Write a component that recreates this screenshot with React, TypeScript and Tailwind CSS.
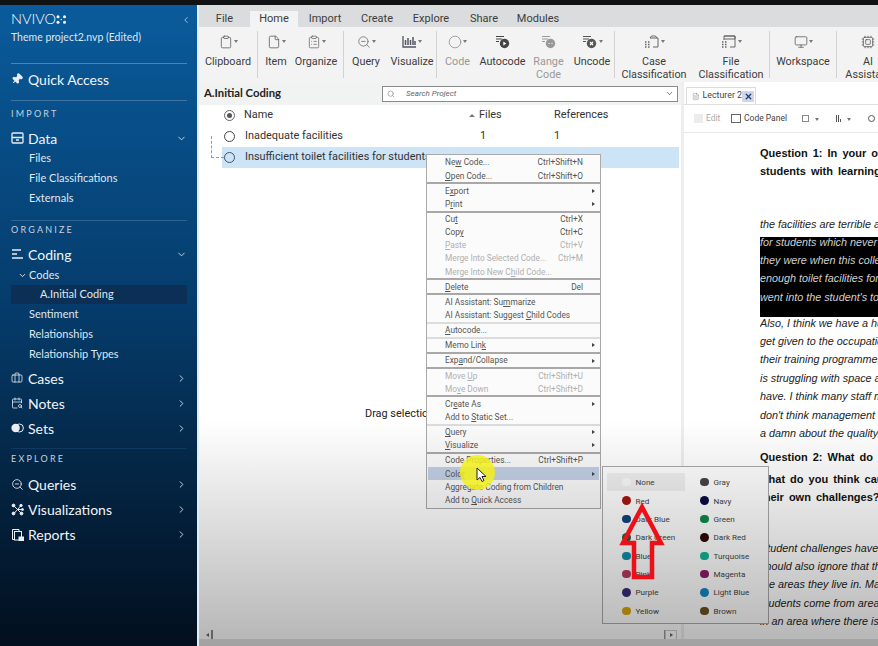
import React from "react";
import { ChevronDown, ChevronRight, ChevronLeft, Briefcase, CalendarSearch, ZoomOut, Pin, Clipboard, File, ClipboardList, Circle, Monitor, Cpu, Search, X, FileText } from "lucide-react";

const Caret = () => <span className="ml-[1px] inline-block h-0 w-0 border-x-[2.5px] border-t-[3px] border-x-transparent border-t-[#777]" />;

const DataIcon = () => (
  <svg width="13" height="12" viewBox="0 0 13 12" fill="none" stroke="#e8eef4" strokeWidth="1.3"><rect x="1" y="1" width="11" height="10" rx="1" /><path d="M1 5.5h11M5 8h3" /></svg>
);
const CodingIcon = () => (
  <svg width="13" height="12" viewBox="0 0 13 12" fill="none" stroke="#e8eef4" strokeWidth="1.6"><path d="M1 2h9M1 6h5M1 10h11" /></svg>
);
const SetsIcon = () => (
  <svg width="13" height="10" viewBox="0 0 13 10"><rect x="4" y="1" width="8.4" height="8" rx="4" fill="none" stroke="#e8eef4" strokeWidth="1" /><circle cx="4.6" cy="5" r="4.2" fill="#e8eef4" /></svg>
);
const VisIcon = () => (
  <svg width="13" height="13" viewBox="0 0 13 13" fill="#e8eef4" stroke="#e8eef4" strokeWidth="1"><path d="M2.5 2.5l8 8M10 2.5l-7 8M6 6.5h6" /><circle cx="2.5" cy="2.5" r="1.4" /><circle cx="10" cy="2.5" r="1.2" /><circle cx="2.5" cy="10.5" r="1.4" /><circle cx="10.5" cy="10.5" r="1.4" /><circle cx="11.5" cy="6.5" r="1" /></svg>
);
const ReportIcon = () => (
  <svg width="13" height="13" viewBox="0 0 13 13" fill="none" stroke="#e8eef4" strokeWidth="1"><path d="M3 11.5H1.5V1.5H8V3" /><rect x="3.5" y="3.5" width="7" height="8.5" /><rect x="8" y="9" width="4.5" height="3.5" fill="#e8eef4" /></svg>
);
const LogoDots = () => (
  <svg width="11" height="9" viewBox="0 0 11 9" fill="#fff"><circle cx="2" cy="1.8" r="1.5" /><circle cx="8.5" cy="1.8" r="1.5" /><circle cx="2" cy="7.2" r="1.5" /><circle cx="8.5" cy="7.2" r="1.5" /><circle cx="5.2" cy="4.5" r=".7" /></svg>
);

const Section = ({ t }: { t: string }) => (
  <div className="flex h-full items-center text-[9px] tracking-[2.2px] text-[#c5d2df]">{t}</div>
);
const Main = ({ icon, t, chev, className = "" }: { icon: React.ReactNode; t: string; chev?: "d" | "r"; className?: string }) => (
  <div className={`flex h-5 shrink-0 items-center text-[14px] text-[#f0f4f8] ${className}`}>
    <span className="flex w-[17px] shrink-0 items-center">{icon}</span>
    <span className="flex-1">{t}</span>
    {chev === "d" && <ChevronDown size={11} strokeWidth={2} color="#d5dee8" />}
    {chev === "r" && <ChevronRight size={11} strokeWidth={2} color="#d5dee8" />}
  </div>
);
const Sub = ({ t }: { t: string }) => <div className="flex h-5 shrink-0 items-center pl-[18px] text-[11px] text-[#dfe7ef]">{t}</div>;

function Sidebar() {
  return (
    <aside className="flex h-full w-[197px] shrink-0 flex-col bg-gradient-to-b from-[#0a5b9c] via-[#053a68] to-[#020f1e] pl-[11px] pr-[10px] font-[Lato,sans-serif]">
      <div className="h-[59px] shrink-0 border-b border-[#4d83ad]">
        <div className="mt-[5px] flex h-[18px] items-center pt-[1px] text-[14.5px] font-light leading-none text-white">
          <span>NVIVO</span><LogoDots />
          <span className="flex-1" />
          <ChevronLeft size={10} color="#b9cede" className="-mr-[4px]" />
        </div>
        <div className="flex h-5 items-center text-[10.5px] text-[#dbe7f1]">Theme project2.nvp (Edited)</div>
      </div>
      <div className="h-[37px] shrink-0 border-b border-[#3f75a0] pb-[10px] pt-[3px]">
        <Main icon={<Pin size={12} fill="#e8eef4" color="#e8eef4" className="rotate-45" />} t="Quick Access" className="!h-6" />
      </div>
      <div className="h-[22px] shrink-0 pt-[3px]"><Section t="IMPORT" /></div>
      <Main icon={<DataIcon />} t="Data" chev="d" className="mt-[5px]" />
      <Sub t="Files" />
      <Sub t="File Classifications" />
      <Sub t="Externals" />
      <div className="mt-[12px] h-[18px] shrink-0 border-t border-[#2f6390]"><Section t="ORGANIZE" /></div>
      <Main icon={<CodingIcon />} t="Coding" chev="d" className="mb-[1px] mt-[6px]" />
      <div className="flex h-5 shrink-0 items-center pl-[7px] text-[11px] text-[#dfe7ef]">
        <ChevronDown size={9} strokeWidth={2.5} className="mr-[2px]" />Codes
      </div>
      <div className="flex h-[19px] shrink-0 items-center bg-[#0c2f55] pl-[29px] text-[11px] text-[#dfe7ef]">A.Initial Coding</div>
      <Sub t="Sentiment" />
      <Sub t="Relationships" />
      <Sub t="Relationship Types" />
      <Main icon={<Briefcase size={12} strokeWidth={1.5} />} t="Cases" chev="r" className="mt-[4px]" />
      <Main icon={<CalendarSearch size={12} strokeWidth={1.5} />} t="Notes" chev="r" className="mt-[5px]" />
      <Main icon={<SetsIcon />} t="Sets" chev="r" className="mt-[5px]" />
      <div className="mt-[10px] h-5 shrink-0 border-t border-[#0f3a60]"><Section t="EXPLORE" /></div>
      <Main icon={<ZoomOut size={13} strokeWidth={1.5} />} t="Queries" chev="r" className="mt-[6px]" />
      <Main icon={<VisIcon />} t="Visualizations" chev="r" className="mt-[5px]" />
      <Main icon={<ReportIcon />} t="Reports" chev="r" className="mt-[5px]" />
    </aside>
  );
}

const tabs: [string, string][] = [
  ["File", "w-[51px]"], ["Home", "w-[48px]"], ["Import", "w-[54px]"], ["Create", "w-[50px]"], ["Explore", "w-[58px]"], ["Share", "w-[48px]"], ["Modules", "w-[60px]"],
];

const AutoIcon = ({ mark, color }: { mark: "play" | "dots" | "x"; color: string }) => (
  <svg width="16" height="14" viewBox="0 0 16 14" fill="none" stroke={color} strokeWidth="1.2">
    <path d="M1 1.5h8M1 4h6M1 6.5h3" />
    <circle cx="9.5" cy="8.5" r="4.7" fill={color} stroke="none" />
    {mark === "play" && <path d="M8.3 6.5l3 2-3 2z" fill="#fff" stroke="none" />}
    {mark === "dots" && <path d="M7.5 8.5h1M10.5 8.5h1" stroke="#fff" />}
    {mark === "x" && <path d="M8 7l3 3M11 7l-3 3" stroke="#fff" />}
  </svg>
);
const VisuIcon = () => (
  <svg width="15" height="13" viewBox="0 0 15 13" fill="none" stroke="#556" strokeWidth="1.3"><path d="M1 1v11h13" /><path d="M3.5 10V5M6 10V3M8.5 10V5M11 10V2M13 10V6" strokeWidth="1.5" /></svg>
);
const ClassIcon = () => (
  <svg width="16" height="14" viewBox="0 0 16 14" fill="none" stroke="#666" strokeWidth="1"><path d="M6 3h8v9H9M6 3l1.5-2h4L13 3" /><path d="M1 7h1.5M4 7h1.5M1 9.500h1.500M4 9.500h1.500M1 12h1.500M4 12h1.500" strokeWidth="1.500" /></svg>
);
const FileClassIcon = () => (
  <svg width="16" height="14" viewBox="0 0 16 14" fill="none" stroke="#666" strokeWidth="1"><path d="M3 5V1h11v11H9M3 1h11v3H3" /><path d="M1 7h1.500M4 7h1.500M1 9.500h1.500M4 9.500h1.500M1 12h1.500M4 12h1.500" strokeWidth="1.500" /></svg>
);

type RItem = { w: string; l: string[]; icon: React.ReactNode; caret?: boolean; dim?: boolean };
const groups: { cls?: string; items: RItem[] }[] = [
  { items: [{ w: "w-[58px]", l: ["Clipboard"], icon: <Clipboard size={14} strokeWidth={1.3} color="#555" />, caret: true }] },
  { cls: "w-[86px]", items: [
    { w: "w-[36px]", l: ["Item"], icon: <File size={14} strokeWidth={1.3} color="#555" />, caret: true },
    { w: "w-[44px]", l: ["Organize"], icon: <ClipboardList size={14} strokeWidth={1.3} color="#666" />, caret: true },
  ] },
  { items: [
    { w: "w-[44px]", l: ["Query"], icon: <ZoomOut size={14} strokeWidth={1.3} color="#666" />, caret: true },
    { w: "w-[48px]", l: ["Visualize"], icon: <VisuIcon />, caret: true },
  ] },
  { items: [
    { w: "w-[41px]", l: ["Code"], icon: <Circle size={14} strokeWidth={1.3} color="#888" />, caret: true, dim: true },
    { w: "w-[49px]", l: ["Autocode"], icon: <AutoIcon mark="play" color="#444" /> },
    { w: "w-[43px]", l: ["Range", "Code"], icon: <AutoIcon mark="dots" color="#999" />, dim: true },
    { w: "w-[44px]", l: ["Uncode"], icon: <AutoIcon mark="x" color="#555" />, caret: true },
  ] },
  { items: [
    { w: "w-[78px]", l: ["Case", "Classification"], icon: <ClassIcon />, caret: true },
    { w: "w-[76px]", l: ["File", "Classification"], icon: <FileClassIcon />, caret: true },
  ] },
  { items: [{ w: "w-[66px]", l: ["Workspace"], icon: <Monitor size={14} strokeWidth={1.3} color="#555" />, caret: true }] },
  { items: [{ w: "w-[62px]", l: ["AI", "Assistant"], icon: <Cpu size={14} strokeWidth={1.3} color="#555" /> }] },
];

function Ribbon() {
  return (
    <>
      <div className="flex h-[22px] shrink-0 items-end bg-[#dbdcdd] text-[11px] text-[#3c3c3c]">
        {tabs.map(([t, w]) => (
          <div key={t} className={`flex h-[16px] items-center justify-center pt-[1px] ${w} ${t === "Home" ? "bg-[#f3f3f3]" : ""}`}>{t}</div>
        ))}
      </div>
      <div className="flex h-[55px] shrink-0 overflow-hidden bg-[#f3f3f3] text-[10.8px] leading-[13px] text-[#3c3c3c]">
        {groups.map((g, i) => (
          <div key={i} className={`mt-[4px] flex h-[47px] shrink-0 border-r border-[#d2d2d2] last:border-r-0 ${g.cls ?? ""}`}>
            {g.items.map((it) => (
              <div key={it.l.join()} className={`flex shrink-0 flex-col items-center ${it.w} ${it.dim ? "text-[#999]" : ""}`}>
                <div className="flex h-[21px] shrink-0 items-center">{it.icon}{it.caret && <Caret />}</div>
                <div className="mt-[3px] text-center whitespace-nowrap">{it.l.map((x) => <div key={x}>{x}</div>)}</div>
              </div>
            ))}
          </div>
        ))}
      </div>
    </>
  );
}

function ListPanel() {
  return (
    <div className="flex w-[482px] shrink-0 flex-col bg-white text-[10.9px] text-[#333]">
      <div className="flex h-[23px] shrink-0 items-center bg-[#f1f2f2] pl-[5px] pr-[3px]">
        <span className="w-[178px] font-[Lato,sans-serif] text-[11.3px] font-bold text-[#222]">A.Initial Coding</span>
        <div className="flex h-[16px] flex-1 items-center border border-[#8a8a8a] bg-white pl-[4px] pr-[3px] text-[8px] italic text-[#666]">
          <Search size={8} color="#888" />
          <span className="ml-[11px] flex-1">Search Project</span>
          <ChevronDown size={9} color="#444" />
        </div>
      </div>
      <div className="flex h-[21px] shrink-0 items-center">
        <span className="ml-[25px] flex h-[11px] w-[11px] items-center justify-center rounded-full border border-[#666] text-[9px] leading-none"><span className="h-[5px] w-[5px] rounded-full bg-[#555]" /></span>
        <span className="ml-[9px] w-[225px]">Name</span>
        <span className="mr-[4px] h-0 w-0 border-x-[3px] border-b-[3px] border-x-transparent border-b-[#777]" />
        <span className="w-[75px]">Files</span>
        <span>References</span>
      </div>
      <div className="flex h-[21px] shrink-0 items-center pb-[1px]">
        <span className="ml-[25px] h-[11px] w-[11px] rounded-full border-[1.5px] border-[#444]" />
        <span className="ml-[10px] w-[235px]">Inadequate facilities</span>
        <span className="w-[74px]">1</span>
        <span>1</span>
      </div>
      <div className="relative ml-[23px] mr-[2px] flex h-[21px] shrink-0 items-center bg-[#cde4f7]">
        <span className="absolute -left-[11px] -top-[11px] h-[22px] w-[13px] border-b border-l border-dashed border-[#999]" />
        <span className="ml-[2px] h-[11px] w-[11px] rounded-full border-[1.5px] border-[#36536e]" />
        <span className="ml-[10px]">Insufficient toilet facilities for students</span>
      </div>
      <div className="flex flex-1 items-center justify-center pt-[30px]">
        <span className="w-[150px] text-[10.9px] text-[#222]">Drag selection</span>
      </div>
      <div className="flex h-[9px] shrink-0 items-center pl-[7px] pr-[4px]">
        <span className="h-0 w-0 border-y-[2.5px] border-r-[3px] border-y-transparent border-r-[#666]" />
        <span className="ml-[2px] h-[9px] w-[2px] bg-[#888]" />
        <span className="flex-1" />
        <span className="h-[10px] w-[1px] bg-[#999]" />
        <span className="flex h-[10px] w-[12px] items-center justify-center border border-[#ccc]"><span className="h-0 w-0 border-y-[2px] border-l-[3px] border-y-transparent border-l-[#666]" /></span>
      </div>
    </div>
  );
}

const Line = ({ b, c, children }: { b?: boolean; c?: string; children: React.ReactNode }) => (
  <div className={`h-[18.4px] overflow-hidden whitespace-nowrap leading-[18.4px] ${b ? "text-[11px] font-bold [word-spacing:2px]" : "text-[10.8px] italic"} ${c ?? ""}`}>{children}</div>
);

function DocPanel() {
  return (
    <div className="flex min-w-0 flex-1 flex-col bg-white">
      <div className="flex h-[23px] shrink-0 items-end border-b border-[#e0e0e0] bg-white pl-[2px]">
        <div className="flex h-[17px] w-[70px] items-center border border-b-0 border-[#dcdcdc] pl-[5px] text-[8.8px] text-[#444]">
          <FileText size={11} strokeWidth={1.2} color="#666" />
          <span className="ml-[3px] flex-1 whitespace-nowrap">Lecturer 2</span>
          <span className="mr-[1px] flex h-[11px] w-[12px] shrink-0 items-center justify-center bg-[#cfd6e4]"><X size={9} strokeWidth={3.5} color="#1a3a80" /></span>
        </div>
      </div>
      <div className="flex h-[28px] shrink-0 items-center border-b border-[#e8e8e8] pl-[10px] text-[8.5px]">
        <span className="h-[9px] w-[9px] bg-[#ececec]" />
        <span className="ml-[3px] w-[25px] text-[#aaa]">Edit</span>
        <span className="h-[9px] w-[10px] border border-[#666] bg-white" />
        <span className="ml-[3px] w-[58px] whitespace-nowrap text-[#444]">Code Panel</span>
        <span className="h-[7px] w-[7px] border border-[#888]" />
        <span className="ml-[5px] mr-[17px]"><Caret /></span>
        <span className="mr-[5px] flex h-[7px] items-end gap-[1px]"><span className="h-[7px] w-[1px] bg-[#555]" /><span className="h-[7px] w-[1px] bg-[#555]" /><span className="h-[3px] w-[1px] bg-[#555]" /></span>
        <span className="mr-[17px]"><Caret /></span>
        <span className="h-[7px] w-[7px] rounded-full border border-[#555]" />
      </div>
      <div className="flex-1 overflow-hidden pl-[76px] pt-[11px] font-['Liberation_Sans',sans-serif] text-[#111]">
        <Line b>Question 1: In your opinion, what are the</Line>
        <Line b>students with learning difficulties?</Line>
        <div className="h-[34px]" />
        <Line c="text-[#222]">the facilities are terrible and we have</Line>
        <div className="mt-[3.5px] h-[80px] overflow-hidden bg-black text-[#d0d0d0]">
          <div className="-mt-[4px]">
            <Line>for students which never get repaired</Line>
            <Line>they were when this college was built</Line>
            <Line>enough toilet facilities for our students</Line>
            <Line>went into the student's toilets</Line>
          </div>
        </div>
        <Line c="-mt-[3px] text-[#222]">Also, I think we have a huge problem</Line>
        <Line c="text-[#222]">get given to the occupational therapy</Line>
        <Line c="text-[#222]">their training programmes and that</Line>
        <Line c="text-[#222]">is struggling with space and the</Line>
        <Line c="text-[#222]">have. I think many staff members are</Line>
        <Line c="text-[#222]">don't think management care and do</Line>
        <Line c="text-[#222]">a damn about the quality.</Line>
        <div className="h-[6px]" />
        <Line b>Question 2: What do you think are the</Line>
        <div className="h-[3px]" />
        <Line b>what do you think causes students to</Line>
        <Line b>their own challenges?</Line>
        <div className="h-[32px]" />
        <Line c="text-[#222]">Student challenges have many causes</Line>
        <Line c="text-[#222]">should also ignore that the students</Line>
        <Line c="text-[#222]">the areas they live in. Many of</Line>
        <Line c="text-[#222]">students come from areas where</Line>
        <Line c="text-[#222]">in an area where there is very little</Line>
      </div>
    </div>
  );
}

type MI = { t: string; k?: string; arrow?: boolean; dim?: boolean; hi?: boolean } | { sep: "dark" | "light" };
const menu: MI[] = [
  { t: "Ne&w Code...", k: "Ctrl+Shift+N" },
  { t: "&Open Code...", k: "Ctrl+Shift+O" },
  { sep: "dark" },
  { t: "E&xport", arrow: true },
  { t: "P&rint", arrow: true },
  { sep: "dark" },
  { t: "Cu&t", k: "Ctrl+X" },
  { t: "Cop&y", k: "Ctrl+C" },
  { t: "&Paste", k: "Ctrl+V", dim: true },
  { t: "Merge Into Selected Code...", k: "Ctrl+M", dim: true },
  { t: "Merge Into New C&hild Code...", dim: true },
  { sep: "dark" },
  { t: "&Delete", k: "Del" },
  { sep: "dark" },
  { t: "AI Assistant: Su&mmarize" },
  { t: "AI Assistant: Suggest &Child Codes" },
  { sep: "light" },
  { t: "&Autocode..." },
  { sep: "light" },
  { t: "Memo Lin&k", arrow: true },
  { sep: "dark" },
  { t: "Exp&and/Collapse", arrow: true },
  { sep: "dark" },
  { t: "Move &Up", k: "Ctrl+Shift+U", dim: true },
  { t: "Mo&ve Down", k: "Ctrl+Shift+D", dim: true },
  { sep: "dark" },
  { t: "Cr&eate As", arrow: true },
  { t: "Add to &Static Set..." },
  { sep: "light" },
  { t: "&Query", arrow: true },
  { t: "&Visualize", arrow: true },
  { sep: "dark" },
  { t: "Code Properties...", k: "Ctrl+Shift+P" },
  { t: "Colo&r", arrow: true, hi: true },
  { t: "A&ggregate Coding from Children" },
  { t: "Add to &Quick Access" },
];

const Mn = ({ t }: { t: string }) => {
  const i = t.indexOf("&");
  if (i < 0) return <>{t}</>;
  return <>{t.slice(0, i)}<u>{t[i + 1]}</u>{t.slice(i + 2)}</>;
};

function ContextMenu() {
  return (
    <div className="absolute left-[426px] top-[154px] w-[175px] border border-[#aaa] bg-[#fbfbfb] py-[1px] text-[8.3px] text-[#555]">
      {menu.map((m, i) =>
        "sep" in m ? (
          <div key={i} className={`h-[2px] ${m.sep === "dark" ? "bg-[#a8a8a8]" : "bg-[#dcdcdc]"}`} />
        ) : (
          <div key={i} className={`mx-[1px] flex h-[13.15px] items-center pl-[17px] pr-[2px] leading-none ${m.hi ? "bg-[#c3d1e6]" : ""} ${m.dim ? "text-[#b0b0b0]" : ""}`}>
            <span className="flex-1 whitespace-nowrap"><Mn t={m.t} /></span>
            {m.k && <span className="pr-[14px]">{m.k}</span>}
            {m.arrow && <span className="mr-[2px] h-0 w-0 border-y-[2.5px] border-l-[3px] border-y-transparent border-l-[#444]" />}
          </div>
        )
      )}
    </div>
  );
}

const colorsL: [string, string][] = [["None", "#fafafa"], ["Red", "#a5170e"], ["Dark Blue", "#10427f"], ["Dark Green", "#0a6a3c"], ["Blue", "#0f8ea8"], ["Pink", "#b83a5c"], ["Purple", "#3a2a7a"], ["Yellow", "#d9a50c"]];
const colorsR: [string, string][] = [["Gray", "#454545"], ["Navy", "#0c0c40"], ["Green", "#0c8a4a"], ["Dark Red", "#300808"], ["Turquoise", "#12b592"], ["Magenta", "#8e1a66"], ["Light Blue", "#1488c0"], ["Brown", "#6a5220"]];

const Swatch = ({ n, c, hi }: { n: string; c: string; hi?: boolean }) => (
  <div className={`flex h-[18.4px] items-center pl-[15px] ${hi ? "bg-[#f0f0f0]" : ""}`}>
    <span className="h-[8.500px] w-[8.500px] shrink-0 rounded-full" style={{ backgroundColor: c }} />
    <span className="ml-[5px]">{n}</span>
  </div>
);

function ColorPopup() {
  return (
    <div className="absolute left-[602px] top-[466px] flex h-[158px] w-[167px] border border-[#aaa] bg-white pl-[4px] pt-[6px] text-[8.1px] text-[#444]">
      <div className="w-[78px]">{colorsL.map(([n, c], i) => <Swatch key={n} n={n} c={c} hi={i === 0} />)}</div>
      <div className="w-[79px]">{colorsR.map(([n, c]) => <Swatch key={n} n={n} c={c} />)}</div>
    </div>
  );
}

export default function App() {
  return (
    <div className="relative flex h-[646px] w-[878px] flex-col overflow-hidden bg-white font-[Roboto,sans-serif]">
      <div className="h-[5px] shrink-0 bg-[#111214]" />
      <div className="flex min-h-0 flex-1">
        <Sidebar />
        <div className="w-[2px] shrink-0 bg-[#e3edf6]" />
        <main className="flex min-w-0 flex-1 flex-col">
          <Ribbon />
          <div className="flex min-h-0 flex-1">
            <ListPanel />
            <div className="w-[3px] shrink-0 bg-[#eeeeee]" />
            <DocPanel />
          </div>
          <div className="h-[7px] shrink-0 bg-[#e4e4e4]" />
        </main>
      </div>
      <ContextMenu />
      <ColorPopup />
      <div className="pointer-events-none absolute bottom-0 left-[199px] right-0 h-[226px] bg-gradient-to-b from-transparent to-[#0000004a]" />
      <div className="pointer-events-none absolute left-[460px] top-[455px] h-[35px] w-[35px] rounded-full bg-[#f2f01a] opacity-85" />
      <svg className="pointer-events-none absolute left-[476px] top-[467px]" width="11" height="16" viewBox="0 0 11 16">
        <path d="M1 1v12l3-2.500 2 4 2-1-2-4h4z" fill="#fff" stroke="#222" strokeWidth="1" />
      </svg>
      <svg className="pointer-events-none absolute left-[615px] top-[500px]" width="54" height="84" viewBox="0 0 54 84" fill="none" stroke="#ec1019" strokeWidth="4.500" strokeLinejoin="miter">
        <path d="M27 7 L8 43 H19 V77 H37 V43 H46 Z" />
      </svg>
    </div>
  );
}
